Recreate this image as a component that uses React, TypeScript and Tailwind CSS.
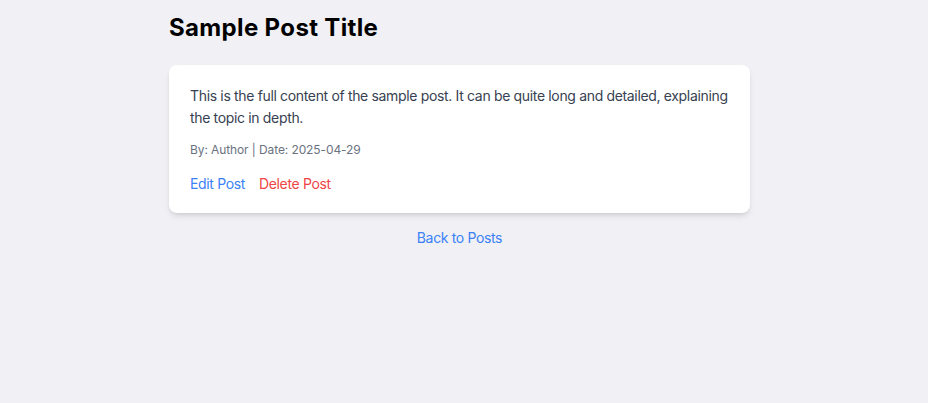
export default function App() {
  return (
    <div className="min-h-[403px] bg-[#f0f0f5] pr-[9px] font-['Inter',_sans-serif]">
      <div className="mx-auto w-[581px] pt-3">
        <h1 className="text-2xl leading-8 font-bold tracking-[0.35px] text-black">Sample Post Title</h1>

        {/* Post card */}
        <div className="mt-[21px] rounded-lg bg-white pt-5 pr-4 pb-[19px] pl-[21px] shadow-md">
          <p className="text-sm leading-[21.5px] tracking-[-0.34px] text-[#374151]">
            This is the full content of the sample post. It can be quite long and detailed, explaining
            the topic in depth.
          </p>
          <p className="mt-[14px] text-xs leading-4 tracking-[-0.1px] text-[#6b7280]">
            By: Author | Date: 2025-04-29
          </p>
          <div className="mt-4 flex gap-[14px] text-sm leading-5 tracking-[-0.35px]">
            <a href="#" className="text-[#3b82f6]">Edit Post</a>
            <a href="#" className="text-[#ef4444]">Delete Post</a>
          </div>
        </div>

        <div className="mt-[15px] text-center text-sm leading-5 tracking-[-0.35px]">
          <a href="#" className="text-[#3b82f6]">Back to Posts</a>
        </div>
      </div>
    </div>
  );
}
